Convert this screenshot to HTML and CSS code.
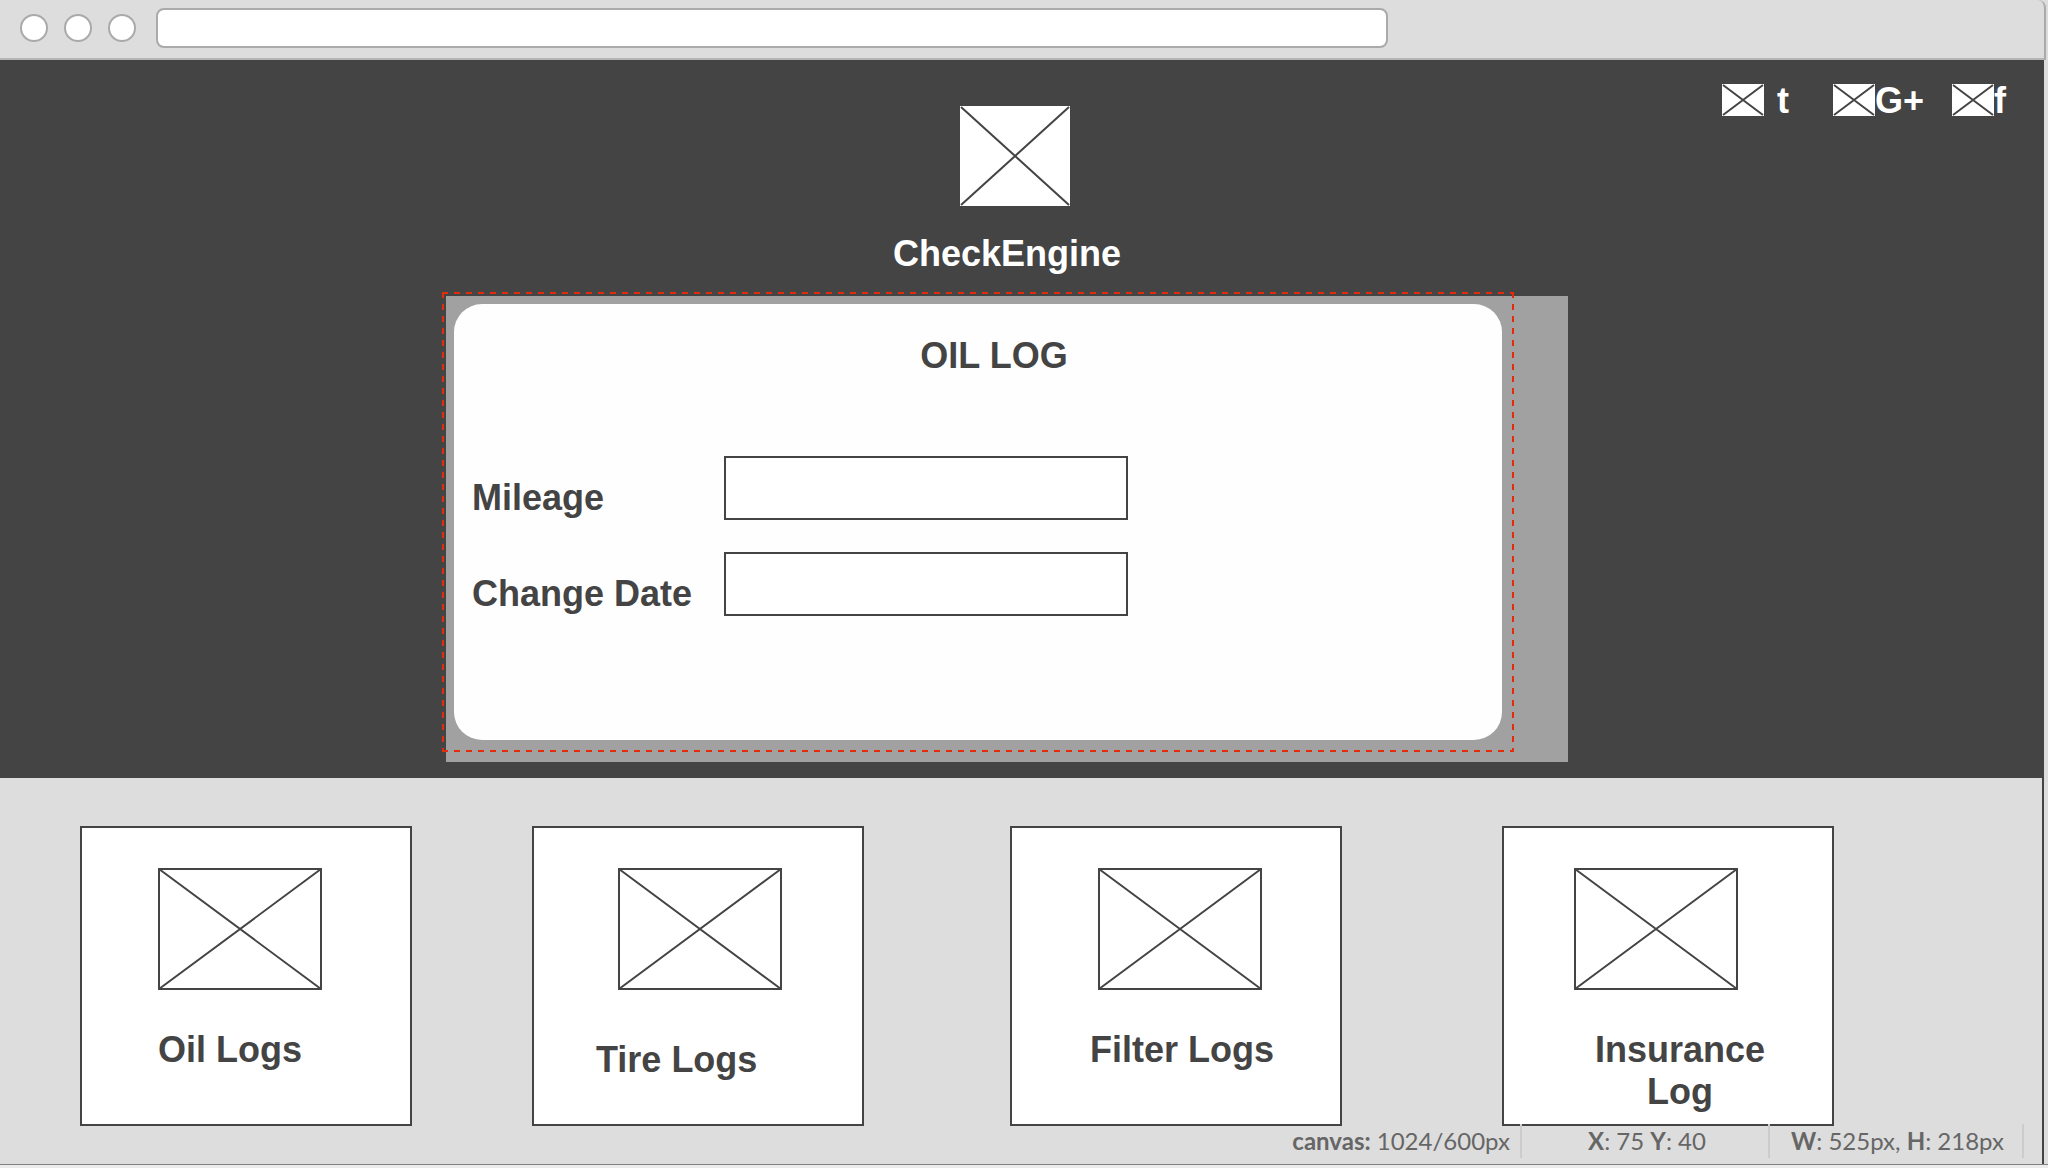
FILE: index.html
```html
<!DOCTYPE html>
<html lang="en">
<head>
<meta charset="utf-8">
<title>CheckEngine</title>
<link rel="stylesheet" href="styles.css">
</head>
<body>
<div class="window">
  <div class="chrome">
    <span class="dot"></span>
    <span class="dot"></span>
    <span class="dot"></span>
    <input class="address" type="text" aria-label="Address">
  </div>

  <header class="hero">
    <nav class="social" aria-label="Social">
      <a class="social-link spaced" href="#"><svg class="pic small" viewBox="0 0 42 32"><path d="M1 1 41 31M41 1 1 31"/></svg>t</a>
      <a class="social-link" href="#"><svg class="pic small" viewBox="0 0 42 32"><path d="M1 1 41 31M41 1 1 31"/></svg>G+</a>
      <a class="social-link" href="#"><svg class="pic small" viewBox="0 0 42 32"><path d="M1 1 41 31M41 1 1 31"/></svg>f</a>
    </nav>
    <svg class="pic logo" viewBox="0 0 110 100"><path d="M1 1 109 99M109 1 1 99"/></svg>
    <h1 class="brand">CheckEngine</h1>
    <div class="panel">
      <form class="form">
        <h2 class="form-title">OIL LOG</h2>
        <div class="field">
          <label for="mileage">Mileage</label>
          <input id="mileage" type="text">
        </div>
        <div class="field">
          <label for="date">Change Date</label>
          <input id="date" type="text">
        </div>
      </form>
      <svg class="selection" viewBox="0 0 1072 460" aria-hidden="true"><path d="M0 1H1072M0 459H1072M1 0V460M1071 0V460"/></svg>
    </div>
  </header>

  <main class="logs">
    <a class="card oil" href="#">
      <svg class="pic" viewBox="0 0 164 122"><path d="M1 1H163V121H1ZL163 121M163 1 1 121"/></svg>
      <span class="card-label">Oil Logs</span>
    </a>
    <a class="card tire" href="#">
      <svg class="pic" viewBox="0 0 164 122"><path d="M1 1H163V121H1ZL163 121M163 1 1 121"/></svg>
      <span class="card-label">Tire Logs</span>
    </a>
    <a class="card filter" href="#">
      <svg class="pic" viewBox="0 0 164 122"><path d="M1 1H163V121H1ZL163 121M163 1 1 121"/></svg>
      <span class="card-label">Filter Logs</span>
    </a>
    <a class="card insurance" href="#">
      <svg class="pic" viewBox="0 0 164 122"><path d="M1 1H163V121H1ZL163 121M163 1 1 121"/></svg>
      <span class="card-label">Insurance Log</span>
    </a>
  </main>

  <div class="status">
    <span class="cell canvas-size"><b>canvas:</b> 1024/600px</span>
    <span class="cell position"><b>X</b>: 75 <b>Y</b>: 40</span>
    <span class="cell size"><b>W</b>: 525px, <b>H</b>: 218px</span>
  </div>
</div>
</body>
</html>
```

FILE: styles.css
```css
* {
  box-sizing: border-box;
}

body {
  margin: 0;
  background: #ececec;
  color: #444;
  font: bold 36px/42px "Liberation Sans", Arial, sans-serif;
}

a {
  color: inherit;
  text-decoration: none;
}

h1,
h2 {
  margin: 0;
  font-size: 36px;
}

.window {
  position: relative;
  margin-bottom: 3px;
  padding-right: 4px;
  border-bottom: 1px solid #808080;
  background: #ddd;
}

/* Browser bar */
.chrome {
  display: flex;
  align-items: center;
  gap: 16px;
  height: 60px;
  padding: 0 20px 4px;
  border-right: 2px solid #aaa;
  border-top-right-radius: 8px;
  margin-right: -2px;
  box-shadow: inset 0 -2px #b5b5b5;
}

.dot {
  width: 28px;
  height: 28px;
  border: 2px solid #aaa;
  border-radius: 50%;
  background: #fff;
}

.address {
  width: 1232px;
  height: 40px;
  margin-left: 4px;
  padding: 0 12px;
  border: 2px solid #aaa;
  border-radius: 8px;
  background: #fff;
  font: 20px "Liberation Sans", Arial, sans-serif;
}

/* Hero */
.hero {
  position: relative;
  display: flex;
  flex-direction: column;
  align-items: center;
  padding: 46px 30px 16px 0;
  background: #444;
  color: #fff;
}

.pic {
  display: block;
  width: 164px;
  height: 122px;
  fill: none;
  stroke: #444;
  stroke-width: 2px;
}

.pic.logo {
  width: 110px;
  height: 100px;
  margin-left: 16px;
  background: #fff;
}

.pic.small {
  width: 42px;
  height: 32px;
  margin-bottom: 6px;
  background: #fff;
}

.brand {
  margin: 27px 0 21px;
}

.social {
  position: absolute;
  top: 20px;
  right: 38px;
  display: flex;
  gap: 28px;
}

.social-link {
  display: flex;
  align-items: flex-end;
}

.social-link.spaced {
  gap: 13px;
  margin-right: 16px;
}

.panel {
  position: relative;
  width: 1122px;
  padding: 8px 66px 22px 8px;
  background: #a1a1a1;
}

.selection {
  position: absolute;
  top: -4px;
  left: -4px;
  width: 1072px;
  height: 460px;
  fill: none;
  stroke: #e42c0a;
  stroke-width: 2px;
  stroke-dasharray: 6 6;
  pointer-events: none;
}

.form {
  height: 436px;
  padding: 31px 18px;
  border-radius: 28px;
  background: #fefefe;
  color: #444;
}

.form-title {
  margin: 0 0 79px 32px;
  text-align: center;
}

.field {
  display: grid;
  grid-template-columns: 252px 404px;
  align-items: end;
  margin-bottom: 32px;
}

.field label {
  padding-bottom: 1px;
}

.field input {
  height: 64px;
  padding: 0 12px;
  border: 2px solid #444;
  background: #fff;
  font: 28px "Liberation Sans", Arial, sans-serif;
}

/* Log cards */
.logs {
  display: grid;
  grid-template-columns: 452fr 478fr 492fr 540fr;
  padding: 48px 0 38px 80px;
  border-right: 2px solid #444;
}

.card {
  display: flex;
  flex-direction: column;
  align-items: flex-start;
  gap: 39px;
  width: 332px;
  height: 300px;
  padding: 40px 0 0 76px;
  border: 2px solid #444;
  background: #fff;
}

.card.tire {
  gap: 49px;
  padding-left: 84px;
}

.tire .card-label {
  margin-left: -22px;
}

.card.filter {
  padding-left: 86px;
}

.filter .card-label {
  margin-left: -8px;
}

.card.insurance {
  padding-left: 70px;
}

.insurance .card-label {
  width: 212px;
  text-align: center;
}

/* Canvas read-out */
.status {
  position: absolute;
  right: 24px;
  bottom: 6px;
  display: flex;
  color: #666;
  font: 24px/34px Lato, sans-serif;
}

.cell {
  border-right: 2px solid #ccc;
}

.canvas-size {
  padding-right: 10px;
}

.position {
  width: 248px;
  padding-left: 4px;
  text-align: center;
}

.size {
  width: 254px;
  padding-right: 18px;
  text-align: right;
}
```
